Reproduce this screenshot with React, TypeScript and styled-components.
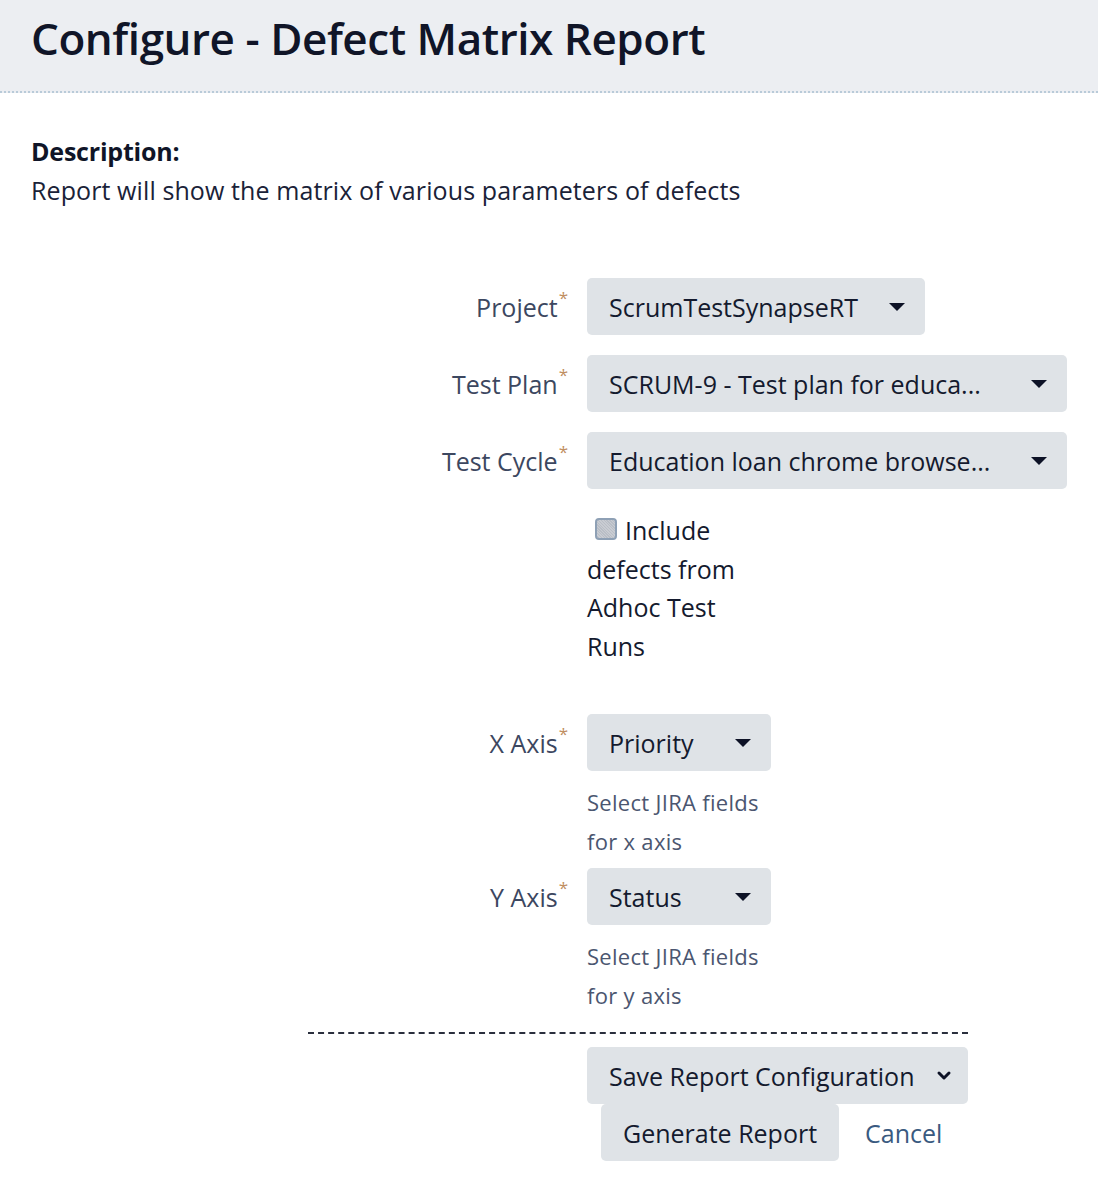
import React from "react";
import styled, { createGlobalStyle } from "styled-components";

const Global = createGlobalStyle`
  html, body { margin: 0; padding: 0; background: #ffffff; }
  body { font-family: "Open Sans", "Noto Sans", sans-serif; color: #172b4d; }
`;

const Page = styled.div`
  width: 1098px;
  min-height: 1186px;
  background: #fff;
`;

const Header = styled.header`
  height: 93px;
  background: #eceef2;
  border-bottom: 2px dotted #b9cbd9;
  padding: 0 31px;
  box-sizing: border-box;
  display: flex;
  align-items: flex-start;
`;

const Title = styled.h1`
  margin: 8px 0 0;
  font-size: 44px;
  font-weight: 600;
  letter-spacing: -0.45px;
  line-height: 60px;
  color: #101528;
`;

const Description = styled.section`
  padding: 39px 31px 0;
`;

const DescLabel = styled.div`
  font-size: 25px;
  font-weight: 700;
  line-height: 38px;
  letter-spacing: -0.2px;
  color: #101528;
`;

const DescText = styled.div`
  font-size: 25px;
  line-height: 40px;
  letter-spacing: 0.1px;
  color: #1a2238;
`;

const Form = styled.div`
  margin-top: 68px;
  display: grid;
  grid-template-columns: 568px 1fr;
  column-gap: 19px;
  padding-right: 31px;
  align-items: start;
`;

const Label = styled.label`
  justify-self: end;
  height: 57px;
  display: flex;
  align-items: center;
  font-size: 25px;
  letter-spacing: 0;
  color: #3c4760;
`;

const Star = styled.sup`
  color: #c08e5f;
  font-size: 17px;
  align-self: flex-start;
  margin-top: 8px;
  margin-left: 1px;
`;

const Field = styled.div<{ $width?: number; $after: number }>`
  display: flex;
  flex-direction: column;
  width: ${(p) => (p.$width ? `${p.$width}px` : "480px")};
  margin-bottom: ${(p) => p.$after}px;
`;

const Select = styled.div`
  height: 57px;
  background: #dfe3e7;
  border-radius: 5px;
  display: flex;
  align-items: center;
  padding: 0 20px 0 22px;
  box-sizing: border-box;
  font-size: 25px;
  letter-spacing: 0;
  color: #141a2e;
  white-space: nowrap;
`;

const SelectText = styled.span`
  flex: 1;
  overflow: hidden;
`;

const Caret = styled.span`
  width: 0;
  height: 0;
  border-left: 8px solid transparent;
  border-right: 8px solid transparent;
  border-top: 8px solid #0d1226;
  margin-left: 12px;
`;

const Help = styled.div`
  margin-top: 12px;
  width: 178px;
  font-size: 22px;
  line-height: 38.5px;
  letter-spacing: 0.3px;
  color: #4b5670;
`;

const Spacer = styled.div``;

const CheckWrap = styled.div`
  width: 160px;
  font-size: 25px;
  line-height: 38.5px;
  letter-spacing: 0;
  color: #141a2e;
  margin-bottom: 49px;
`;

const CheckBox = styled.span`
  display: inline-block;
  width: 22px;
  height: 22px;
  box-sizing: border-box;
  border: 2px solid #8ea0b5;
  border-radius: 4px;
  background: repeating-linear-gradient(45deg, #c9ccd2 0 1px, #b9bec6 1px 2px);
  margin: 0 8px 0 8px;
  vertical-align: 0px;
`;

const Footer = styled.div`
  margin: 18px 130px 0 308px;
  border-top: 2px dashed #2a2f3d;
  padding: 13px 0 0 279px;
  display: flex;
  flex-direction: column;
  align-items: flex-start;
`;

const Button = styled.button<{ $wide?: boolean }>`
  height: 57px;
  border: none;
  border-radius: 5px;
  background: #dfe3e7;
  font-family: inherit;
  font-size: 25px;
  letter-spacing: 0;
  color: #141a2e;
  padding: ${(p) => (p.$wide ? "0 16px 0 22px" : "0 22px")};
  width: ${(p) => (p.$wide ? "381px" : "auto")};
  justify-content: space-between;
  white-space: nowrap;
  display: flex;
  align-items: center;
  gap: 12px;
`;

const Row = styled.div`
  display: flex;
  align-items: center;
  margin-left: 14px;
`;

const CancelLink = styled.a`
  font-size: 25px;
  letter-spacing: 0;
  color: #3a5a80;
  margin-left: 26px;
  text-decoration: none;
`;

const Chevron = () => (
  <svg width="16" height="12" viewBox="0 0 16 12">
    <path d="M3 3 L8 8 L13 3" stroke="#0d1226" strokeWidth="3" fill="none" strokeLinecap="round" strokeLinejoin="round" />
  </svg>
);

const Req = ({ children }: { children: React.ReactNode }) => (
  <Label>
    {children}
    <Star>*</Star>
  </Label>
);

export default function App() {
  return (
    <Page>
      <Global />
      <Header>
        <Title>Configure - Defect Matrix Report</Title>
      </Header>
      <Description>
        <DescLabel>Description:</DescLabel>
        <DescText>Report will show the matrix of various parameters of defects</DescText>
      </Description>
      <Form>
        <Req>Project</Req>
        <Field $width={338} $after={20}>
          <Select>
            <SelectText>ScrumTestSynapseRT</SelectText>
            <Caret />
          </Select>
        </Field>
        <Req>Test Plan</Req>
        <Field $after={20}>
          <Select>
            <SelectText>SCRUM-9 - Test plan for educa...</SelectText>
            <Caret />
          </Select>
        </Field>
        <Req>Test Cycle</Req>
        <Field $after={22}>
          <Select>
            <SelectText>Education loan chrome browse...</SelectText>
            <Caret />
          </Select>
        </Field>
        <Spacer />
        <CheckWrap>
          <CheckBox />Include defects from Adhoc Test Runs
        </CheckWrap>
        <Req>X Axis</Req>
        <Field $width={184} $after={8}>
          <Select>
            <SelectText>Priority</SelectText>
            <Caret />
          </Select>
          <Help>Select JIRA fields for x axis</Help>
        </Field>
        <Req>Y Axis</Req>
        <Field $width={184} $after={0}>
          <Select>
            <SelectText>Status</SelectText>
            <Caret />
          </Select>
          <Help>Select JIRA fields for y axis</Help>
        </Field>
      </Form>
      <Footer>
        <Button $wide>
          Save Report Configuration
          <Chevron />
        </Button>
        <Row>
          <Button>Generate Report</Button>
          <CancelLink href="#">Cancel</CancelLink>
        </Row>
      </Footer>
    </Page>
  );
}
